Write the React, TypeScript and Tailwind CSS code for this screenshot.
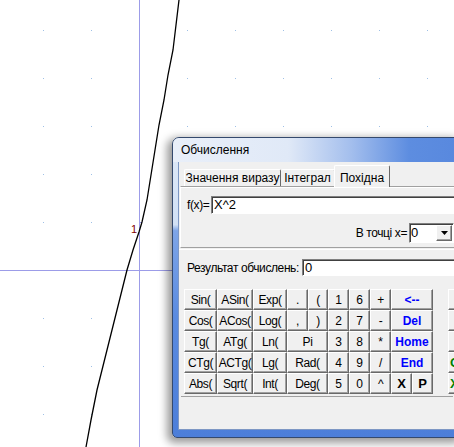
import React from 'react';

type Key = { t: string; span?: boolean; kind?: 'blue' | 'bold' };

const keys: Key[] = [
  { t: 'Sin(' }, { t: 'ASin(' }, { t: 'Exp(' }, { t: '.' }, { t: '(' }, { t: '1' }, { t: '6' }, { t: '+' }, { t: '<--', span: true, kind: 'blue' },
  { t: 'Cos(' }, { t: 'ACos(' }, { t: 'Log(' }, { t: ',' }, { t: ')' }, { t: '2' }, { t: '7' }, { t: '-' }, { t: 'Del', span: true, kind: 'blue' },
  { t: 'Tg(' }, { t: 'ATg(' }, { t: 'Ln(' }, { t: 'Pi', span: true }, { t: '3' }, { t: '8' }, { t: '*' }, { t: 'Home', span: true, kind: 'blue' },
  { t: 'CTg(' }, { t: 'ACTg(' }, { t: 'Lg(' }, { t: 'Rad(', span: true }, { t: '4' }, { t: '9' }, { t: '/' }, { t: 'End', span: true, kind: 'blue' },
  { t: 'Abs(' }, { t: 'Sqrt(' }, { t: 'Int(' }, { t: 'Deg(', span: true }, { t: '5' }, { t: '0' }, { t: '^' }, { t: 'X', kind: 'bold' }, { t: 'P', kind: 'bold' },
];

const sideKeys = ['', '', '', 'OK', 'X'];

const btn =
  'flex items-center justify-center bg-[#f0f0f0] border border-t-white border-l-white border-r-[#696969] border-b-[#696969] shadow-[inset_-1px_-1px_0_#a0a0a0] leading-none whitespace-nowrap';

const sunken =
  'bg-white border border-t-[#808080] border-l-[#808080] border-r-white border-b-white shadow-[inset_1px_1px_0_#404040]';

const gridX = [43, 91, 139, 187, 235, 283, 331, 379, 427];
const gridY = [30, 78, 126, 174, 222, 270, 318, 366, 414];
const curve =
  '179,0 176,25 173,50 168,75 164,100 159,125 155,150 151,175 147,200 142,222 139,232 133,250 127,270 122,290 117,310 112,330 107,350 102,370 97,390 91,420 86,447';

function Graph() {
  return (
    <svg className="absolute inset-0" width={454} height={447}>
      {gridX.map(x =>
        gridY.map(y =>
          x === 139 || y === 270 ? null : (
            <rect key={`${x}-${y}`} x={x} y={y} width={1} height={1} fill="#9fc0e6" />
          )
        )
      )}
      <line x1={139.5} y1={0} x2={139.5} y2={447} stroke="#9c9ce8" strokeWidth={1} />
      <line x1={0} y1={270.5} x2={454} y2={270.5} stroke="#9c9ce8" strokeWidth={1} />
      <line x1={139} y1={222.5} x2={142} y2={222.5} stroke="#9c9ce8" strokeWidth={1} />
      <text x={131} y={233} fontSize={11} fill="#800000" fontFamily="Liberation Sans, sans-serif">1</text>
      <polyline points={curve} fill="none" stroke="#000" strokeWidth={1.3} />
    </svg>
  );
}

function Tabs() {
  return (
    <div className="h-[24px] flex items-end pl-[4px] ml-[1px] whitespace-nowrap">
      <div className="h-[17px] w-[97px] flex items-center justify-center bg-[#f0f0f0] border-t border-l border-r border-t-white border-l-white border-r-[#696969] rounded-t-[2px]">
        Значення виразу
      </div>
      <div className="h-[17px] w-[54px] flex items-center justify-center bg-[#f0f0f0] border-t border-r border-t-white border-r-[#696969] rounded-t-[2px]">
        Інтеграл
      </div>
      <div className="relative z-10 -mb-px h-[22px] w-[56px] flex items-start pt-[3px] justify-center bg-[#f0f0f0] border-t border-l border-r border-t-white border-l-white border-r-[#696969] rounded-t-[2px] -ml-px">
        Похідна
      </div>
    </div>
  );
}

function Window() {
  return (
    <div className="absolute left-[172px] top-[137px] w-[290px] h-[301px] border border-[#34496d] rounded-t-[7px] rounded-b-[5px] bg-[linear-gradient(to_bottom,#dfe9f7_0%,#d2e1f5_29%,#7ea5e7_31%,#5a8be0_60%,#4c7ed9_100%)] shadow-[-3px_3px_8px_2px_rgba(0,0,0,0.4)] overflow-hidden flex flex-col">
      <div className="h-[24px] flex items-center pl-[8px] rounded-t-[6px] bg-[linear-gradient(to_right,#e9eff9_0%,#e0e9f7_40%,#a3beed_62%,#5d8de0_82%,#5888de_100%)] text-[12px] text-black">
        Обчислення
      </div>
      <div className="px-[5px] pb-[7px]">
        <div className="h-[268px] bg-[#f0f0f0] border-l border-r border-b border-[#7d97c4] overflow-hidden flex flex-col text-[12px] text-black">
          <Tabs />
          <div className="h-[62px] ml-[1px] w-[290px] border-t border-l border-b border-t-[#a0a0a0] border-l-white border-b-[#a0a0a0] shadow-[inset_0_1px_0_#ffffff] flex flex-col">
            <div className="mt-[9px] h-[18px] flex items-center pl-[6px]">
              <span className="w-[24px] shrink-0 whitespace-nowrap tracking-[-0.4px]">f(x)=</span>
              <div className={`${sunken} h-[18px] flex-1 flex items-center pl-[2px] text-[13px]`}>X^2</div>
            </div>
            <div className="mt-[9px] h-[20px] flex items-center">
              <span className="w-[226px] shrink-0 text-right whitespace-nowrap tracking-[-0.4px]">В точці x=</span>
              <div className={`${sunken} ml-[2px] h-[20px] w-[45px] shrink-0 flex items-center pl-px text-[13px]`}>
                <span className="flex-1">0</span>
                <div className={`${btn} w-[16px] h-[16px] mr-px`}>
                  <svg width="7" height="4" viewBox="0 0 7 4"><path d="M0 0h7L3.5 4z" fill="#000" /></svg>
                </div>
              </div>
            </div>
          </div>
          <div className="h-[4px] pt-px">
            <div className="h-px bg-white" />
          </div>
          <div className="mt-[7px] h-[17px] flex items-center pl-[8px]">
            <span className="w-[115px] shrink-0 whitespace-nowrap tracking-[-0.4px]">Результат обчислень:</span>
            <div className={`${sunken} h-[17px] flex-1 flex items-center pl-[2px] text-[13px]`}>0</div>
          </div>
          <div className="mt-[13px] flex pl-[5px]">
            <div className="grid grid-cols-[33px_36px_34px_21px_20px_21px_21px_21px_21px_21px] grid-rows-[repeat(5,21px)] shrink-0">
              {keys.map((k, i) => (
                <div
                  key={i}
                  className={`${btn} ${k.span ? 'col-span-2' : ''} ${
                    k.kind === 'blue'
                      ? 'text-[12px] font-bold text-[#0000ff]'
                      : k.kind === 'bold'
                      ? 'text-[13px] font-bold text-black'
                      : 'text-[12px] tracking-[-0.4px] text-black'
                  }`}
                >
                  {k.t}
                </div>
              ))}
            </div>
            <div className="ml-[15px] grid grid-rows-[repeat(5,21px)] w-[40px] shrink-0">
              {sideKeys.map((t, i) => (
                <div key={i} className={`${btn} !justify-start pl-[1px] text-[13px] font-bold text-[#008000]`}>
                  {t}
                </div>
              ))}
            </div>
          </div>
          <div className="mt-[2px] mx-[2px] border-t border-[#a0a0a0] h-px bg-white" />
          <div className="flex-1" />
        </div>
      </div>
    </div>
  );
}

export default function App() {
  return (
    <div className="relative w-[454px] h-[447px] overflow-hidden bg-white font-['Liberation_Sans',Arial,sans-serif]">
      <Graph />
      <Window />
    </div>
  );
}
